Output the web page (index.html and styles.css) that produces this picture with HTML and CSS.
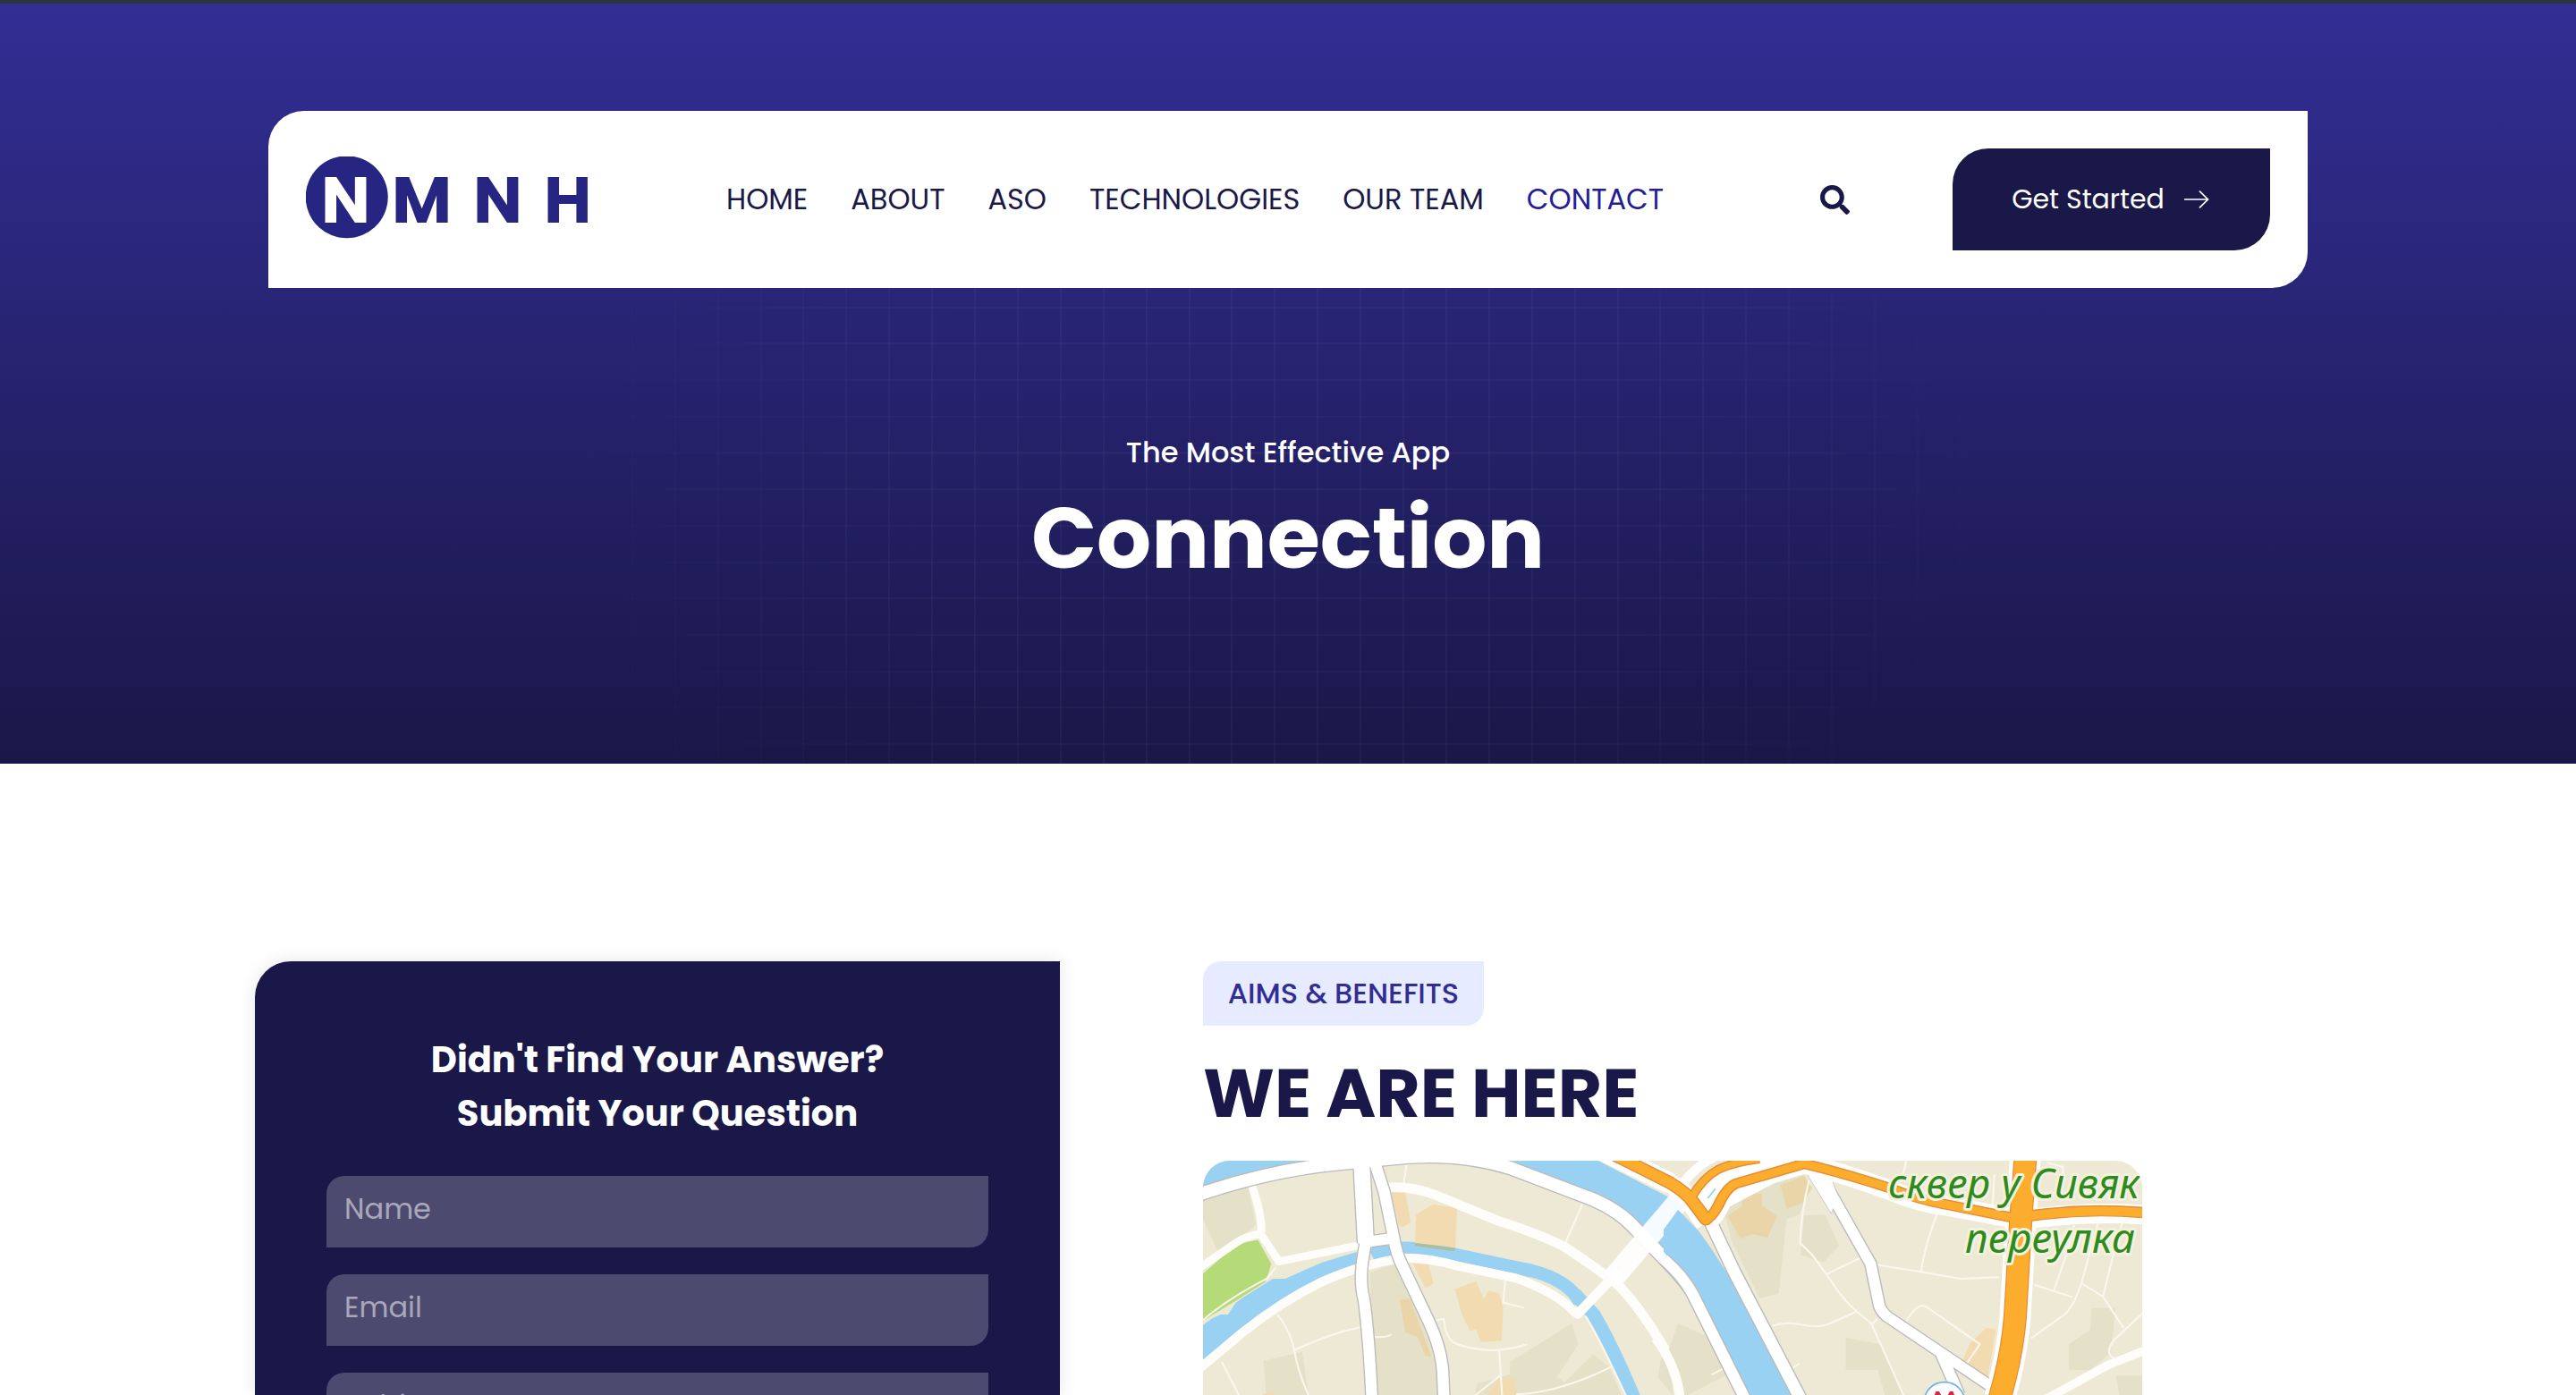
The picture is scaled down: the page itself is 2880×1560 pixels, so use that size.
FILE: index.html
```
<!DOCTYPE html>
<html lang="en">
<head>
<meta charset="utf-8">
<title>Connection</title>
<link rel="stylesheet" href="styles.css">
</head>
<body>
<section class="hero">
  <header class="header">
    <a class="logo">
      <svg width="320" height="96" viewBox="0 0 320 96">
        <circle cx="45.700" cy="45.300" r="46" fill="#262682"/>
        <g class="logo-letters">
          <text x="17" y="74" class="logo-initial">N</text>
          <text x="96" y="74">M</text>
          <text x="187" y="74">N</text>
          <text x="266" y="74">H</text>
        </g>
      </svg>
    </a>
    <nav class="nav">
      <a>HOME</a>
      <a>ABOUT</a>
      <a>ASO</a>
      <a>TECHNOLOGIES</a>
      <a>OUR TEAM</a>
      <a class="current">CONTACT</a>
    </nav>
    <svg class="search" viewBox="0 0 512 512"><path fill="#1a1749" d="M505 442.700L405.300 343c-4.500-4.500-10.600-7-17-7H372c27.600-35.300 44-79.700 44-128C416 93.100 322.900 0 208 0S0 93.100 0 208s93.100 208 208 208c48.300 0 92.700-16.400 128-44v16.300c0 6.400 2.500 12.500 7 17l99.700 99.700c9.400 9.400 24.600 9.400 33.900 0l28.300-28.300c9.400-9.400 9.400-24.600.1-34zM208 336c-70.700 0-128-57.200-128-128 0-70.700 57.200-128 128-128 70.700 0 128 57.200 128 128 0 70.700-57.200 128-128 128z"/></svg>
    <a class="cta">Get Started
      <svg width="28" height="20" viewBox="0 0 28 20" fill="none" stroke="#fff" stroke-width="1.7"><path d="M0 10H27M17 .7L26.500 10L17 19.300"/></svg>
    </a>
  </header>
  <p class="subtitle">The Most Effective App</p>
  <h1 class="title">Connection</h1>
</section>

<main class="content">
  <form class="card">
    <h2 class="card-title">Didn't Find Your Answer?<br>Submit Your Question</h2>
    <input class="field" placeholder="Name">
    <input class="field" placeholder="Email">
    <input class="field" placeholder="Subject">
  </form>
  <section class="place">
    <span class="badge">AIMS &amp; BENEFITS</span>
    <h2 class="place-title">WE ARE HERE</h2>
    <svg class="map" viewBox="0 0 1050 262">
      <rect width="1050" height="400" fill="#eee9d5"/>
      <!-- blocks, buildings, water: west half -->
      <g transform="matrix(.3444 0 0 .3333 -15 -18)">
        <g fill="#e4e1c8">
          <path d="M30 180L190 140L215 270L95 365L30 220Z"/>
          <path d="M585 430L665 400L770 620L805 740V860H605Z"/>
          <path d="M240 725L365 695L390 860H250Z"/>
          <path d="M1040 730L1240 600L1262 670L1192 780L1218 797L1310 703L1362 745L1410 860H920L935 802L1040 770Z"/>
          <path d="M1568 670L1530 720L1520 780L1568 840Z"/>
        </g>
        <g fill="#f2dbb0">
          <path d="M655 160H700L718 260L690 278L678 270Z"/>
          <path d="M725 400L775 402L792 465L765 482Z"/>
          <path d="M682 520L715 515L785 712L765 708L740 645L700 630Z" fill="#e9d5a8"/>
          <path d="M862 485L930 458L955 518L970 490L1005 500L1018 550L1013 658L945 662L930 620L910 625L880 560Z"/>
          <path d="M950 860L1005 785H1058L1062 860Z"/>
          <path d="M210 850L270 825L280 860Z"/><path d="M30 825L60 850H30Z"/>
        </g>
        <path fill="#b4db78" d="M30 445L130 355L170 330L222 320L265 400L255 435L245 462L140 530L30 600Z"/>
        <g fill="#98d1f2">
          <path d="M30 40H470L440 66L30 160Z"/>
          <path d="M30 615L75 582L100 570L125 570L150 530L170 515L270 450L310 450L430 395L560 355V405L400 465L270 548L170 640L30 750Z"/>
          <path d="M1020 40H1300L1600 200V480L1400 250L1280 170Z"/>
        </g>
        <g fill="none" stroke="#98d1f2">
          <path stroke-width="44" d="M590 368Q680 325 870 371Q1000 400 1110 423Q1230 455 1268 530"/>
          <path stroke-width="44" d="M1250 500L1312 570Q1370 670 1445 855"/>
        </g>
        <path fill="#f2dbb0" d="M735 235L790 200L868 212L863 345L732 330Z"/>
        <path fill="#afbd9b" d="M733 330L863 347L860 358L730 340Z"/>
        <g fill="none" stroke="#faf8ee" stroke-width="6">
          <path d="M285 570Q325 620 340 690Q350 760 390 850M340 690Q450 635 555 612M600 645Q640 648 655 637M105 730L165 850M795 590L825 585Q832 660 870 670Q980 710 1095 670M1005 690L1015 850M925 843L1008 775M1025 450L1018 530L1085 548M705 60L695 130M1275 200L1220 330M1060 838Q1200 832 1370 745M40 592Q120 520 250 450L280 412M1285 575Q1330 650 1420 850"/>
        </g>
        <g fill="none" stroke="#fffdf9" stroke-linejoin="round">
          <path stroke-width="32" d="M640 144Q720 138 800 170L1000 255Q1150 305 1220 345Q1330 420 1390 470Q1470 550 1575 745"/>
          <path stroke-width="30" d="M20 762L170 632Q300 525 430 460Q560 400 700 380Q780 380 870 407L1060 448Q1200 500 1255 568"/>
          <path stroke-width="26" d="M30 415L150 330Q180 308 235 298M200 130Q240 250 231 300L290 392L555 337"/>
          <path stroke-width="32" d="M1385 433L1260 568" stroke-linecap="round"/>
        </g>
        <!-- avenues: grey edge under white -->
        <g fill="none" stroke="#bbb">
          <path stroke-width="50" d="M10 174Q250 88 470 65L640 48Q860 20 1040 78L1290 176Q1390 215 1450 285L1568 411Q1640 490 1700 600"/>
          <path stroke-width="60" d="M557 40L572 330"/><path stroke-width="44" d="M572 320L560 400Q553 470 566 520Q582 640 592 860"/>
          <path stroke-width="44" d="M592 30L632 160L662 310Q672 370 690 405L775 590Q820 690 822 770L826 860M590 325L655 315"/>
        </g>
        <g fill="none" stroke="#fff">
          <path stroke-width="42" d="M10 174Q250 88 470 65L640 48Q860 20 1040 78L1290 176Q1390 215 1450 285L1568 411Q1640 490 1700 600"/>
          <path stroke-width="52" d="M557 40L572 330"/><path stroke-width="36" d="M572 320L560 400Q553 470 566 520Q582 640 592 860"/>
          <path stroke-width="36" d="M592 30L632 160L662 310Q672 370 690 405L775 590Q820 690 822 770L826 860M580 326L660 314"/>
          <path stroke-width="72" stroke-opacity=".9" d="M1600 175L1372 452"/>
        </g>
      </g>
      <!-- east half -->
      <g transform="matrix(.35714 0 0 .3333 515 -18)">
        <g fill="#e4e1c8">
          <path d="M230 165L440 100L455 150L425 235L385 250L360 500L300 515L215 330L190 230Z"/>
          <path d="M440 238L505 235L550 340L500 395L428 370Z"/>
          <path d="M45 600L130 640L200 770L60 850L15 690Z"/>
          <path d="M570 648L680 670L760 850H695L670 755H570Z"/>
          <path d="M1340 548H1415L1400 700L1335 757H1268V670L1335 620Z"/>
          <path d="M1415 775H1510V860H1430Z"/>
        </g>
        <g fill="#e9d5a8">
          <path d="M200 240L245 205V160L308 165V205L355 240L325 312L280 300L240 315Z"/>
          <path d="M365 135L440 105L465 145L435 195L385 215Z"/>
          <path fill="#f2dbb0" d="M930 740L960 665L1010 615L1040 620L1015 780Z"/>
        </g>
        <g fill="none" stroke="#faf8ee" stroke-width="6">
          <path d="M455 120Q430 230 427 330L465 370L510 435Q560 520 605 560L650 600L755 850M510 435L615 380M605 560L520 600Q490 618 420 602Q380 595 340 608M665 403L805 427L930 450L1050 445M855 235Q820 330 805 427M650 605L668 585M760 590Q800 520 830 550L990 670L945 740M1160 470L1280 512M1222 488L1260 370L1285 270M1360 260L1308 465Q1280 550 1255 570L1150 650M1308 465L1375 510L1440 615M1435 265L1405 380L1375 510M1505 560L1410 655Q1385 690 1400 710L1420 725M150 772L190 750M380 765L425 735M760 50L750 100M1035 100L1030 200M1200 60L1250 75L1250 110"/>
        </g>
        <path fill="none" stroke="#fffdf9" stroke-width="28" d="M1190 858L1390 740L1520 685"/>
        <path fill="none" stroke="#fffdf9" stroke-width="30" d="M-25 650Q40 740 52 855"/>
        <path fill="#98d1f2" d="M0 285L45 218L110 290L150 350L215 460L410 850H275L100 490L0 360Z"/>
        <g fill="none" stroke="#bbb">
          <path stroke-width="43" d="M0 384Q60 440 90 500L258 860"/>
          <path stroke-width="46" d="M138 240L220 425L432 860"/>
          <path stroke-width="42" d="M500 120L648 400L675 540Q680 560 700 577L1040 822M868 700L925 840"/>
          <path stroke-width="2" fill="#fff" d="M438 80L520 95L545 172L525 232Z"/>
        </g>
        <g fill="none" stroke="#fff">
          <path stroke-width="35" d="M0 384Q60 440 90 500L258 860"/>
          <path stroke-width="38" d="M138 240L220 425L432 860"/>
          <path stroke-width="34" d="M490 100L648 400L675 540Q680 560 700 577L1040 822M868 700L925 840"/>
          <path stroke-width="30" d="M60 130Q110 60 190 25"/>
        </g>
        <!-- highways: white casing, dark edge, orange fill -->
        <path fill="#fff" d="M90 180L200 60L440 40L380 110L150 240Z"/>
        <path stroke="#98d1f2" stroke-width="5" d="M138 180L162 148"/>
        <g fill="none" stroke="#fff">
          <path stroke-width="70" d="M-190 20L20 130"/>
          <path stroke-width="62" d="M20 130Q70 160 90 200L130 265"/>
          <path stroke-width="66" d="M135 255Q150 250 170 210Q195 150 225 135L440 64Q560 95 700 150Q800 195 880 205L1100 248M1140 250Q1330 222 1520 236"/>
          <path stroke-width="98" d="M1134 20L1118 250L1103 530Q1098 680 1052 850"/>
        </g>
        <g fill="none" stroke="#e88d35">
          <path stroke-width="43" d="M-190 15L20 128Q70 160 90 190L132 250" stroke-linejoin="round" stroke-linecap="round"/>
          <path stroke-width="35" d="M135 250Q150 245 170 206Q195 146 225 131L440 64Q560 95 700 143Q800 185 880 200L1100 247" stroke-linecap="round"/>
          <path stroke-width="30" d="M90 172Q125 110 170 84Q220 58 300 48"/>
          <path stroke-width="38" d="M1140 240Q1330 210 1520 230"/>
          <path stroke-width="73" d="M1134 20L1118 250L1103 530Q1098 680 1052 850"/>
        </g>
        <g fill="none" stroke="#fdad2d">
          <path stroke-width="34" d="M-190 15L20 128Q70 160 90 190L132 250" stroke-linejoin="round" stroke-linecap="round"/>
          <path stroke-width="26" d="M135 250Q150 245 170 206Q195 146 225 131L440 64Q560 95 700 143Q800 185 880 200L1100 247" stroke-linecap="round"/>
          <path stroke-width="21" d="M90 172Q125 110 170 84Q220 58 300 48"/>
          <path stroke-width="30" d="M1120 243Q1330 210 1520 230"/>
          <path stroke-width="66" d="M1134 20L1118 250L1103 530Q1098 680 1052 850"/>
        </g>
        <circle cx="879" cy="860" r="63" fill="#fff" stroke="#6fb2e8" stroke-width="5"/>
        <path fill="#e2213c" d="M842 860L852 828H862L879 860L896 828H906L916 860Z"/>
      </g>
      <g class="map-label">
        <text x="766" y="42" textLength="281" lengthAdjust="spacingAndGlyphs">сквер у Сивяк</text>
        <text x="852" y="103" textLength="190" lengthAdjust="spacingAndGlyphs">переулка</text>
      </g>
    </svg>
  </section>
</main>
</body>
</html>
```
FILE: styles.css
```
* { box-sizing: border-box; }

body {
  margin: 0;
  background: #fff;
  font-family: Poppins, Inter, sans-serif;
  color: #1a1749;
}

.hero {
  position: relative;
  height: 854px;
  padding: 120px 300px 0;
  border-top: 4px solid #2d353d;
  background: linear-gradient(#322e94, #1a1748);
  color: #fff;
  text-align: center;
}

/* faint grid that fades towards the edges */
.hero::before {
  content: "";
  position: absolute;
  left: 658px;
  top: 298px;
  width: 1544px;
  height: 552px;
  background:
    repeating-linear-gradient(90deg, rgba(255,255,255,.036) 0 2px, transparent 2px 47.900px),
    repeating-linear-gradient(rgba(255,255,255,.028) 0 2px, transparent 2px 40.700px);
  -webkit-mask-image: radial-gradient(ellipse 840px 680px at 50% 253px, #000 50%, transparent 100%);
  mask-image: radial-gradient(ellipse 840px 680px at 50% 253px, #000 50%, transparent 100%);
}

.header {
  position: relative;
  display: flex;
  align-items: center;
  height: 198px;
  padding: 0 42px;
  background: #fff;
  border-radius: 40px 0;
}

.logo { width: 470px; height: 96px; text-align: left; }
.logo-letters {
  font: 700 73px Poppins, "Open Sans", sans-serif;
  fill: #262682;
}
.logo-initial { fill: #fff; }

.nav {
  display: flex;
  gap: 48px;
  width: 1223px;
  font-size: 32px;
  line-height: 48px;
  color: #1a1749;
  white-space: nowrap;
}
.current { color: #231d97; }

.search { width: 33px; height: 33px; }

.cta {
  display: flex;
  align-items: center;
  justify-content: center;
  gap: 22px;
  width: 355px;
  height: 114px;
  margin-left: auto;
  padding-right: 2px;
  border-radius: 40px 0;
  background: #1a1749;
  color: #fff;
  font-size: 30px;
}

.subtitle {
  position: relative;
  margin: 160px 0 0;
  font-size: 32px;
  line-height: 48px;
  font-weight: 500;
}

.title {
  position: relative;
  margin: 0;
  font-size: 96px;
  line-height: 144px;
  font-weight: 700;
}

.content {
  display: grid;
  grid-template-columns: 900px 1050px;
  column-gap: 160px;
  height: 706px;
  padding: 221px 0 0 285px;
  overflow: hidden;
}

.card {
  display: flex;
  flex-direction: column;
  gap: 30px;
  height: 485px;
  padding: 80px 80px 0;
  border-radius: 40px 0 0 0;
  background: #1a1749;
  box-shadow: 0 0 20px rgba(0, 0, 0, .1);
  overflow: hidden;
}

.card-title {
  margin: 0 0 10px;
  color: #fff;
  font-size: 40px;
  line-height: 60px;
  font-weight: 700;
  text-align: center;
}

.field {
  flex: none;
  width: 740px;
  height: 80px;
  padding: 0 20px 6px;
  border: 0;
  border-radius: 20px 0;
  background: #4d4a70;
  font: 400 32px Poppins, Inter, sans-serif;
}
.field::placeholder { color: #a9a7ba; opacity: 1; }

.badge {
  display: flex;
  align-items: center;
  justify-content: center;
  width: 314px;
  height: 72px;
  border-radius: 20px 0;
  background: #e6ebff;
  color: #322d92;
  font-size: 32px;
  font-weight: 500;
}

.place-title {
  margin: 30px 0;
  font-size: 76px;
  line-height: 91px;
  font-weight: 700;
}

.map {
  display: block;
  width: 1050px;
  height: 262px;
  border-radius: 30px 30px 0 0;
}

.map-label text {
  font: italic 400 45px "Noto Sans", "Open Sans", sans-serif;
  fill: #2f8a1e;
  stroke: #f4f1df;
  stroke-width: 6px;
  stroke-linejoin: round;
  paint-order: stroke;
}
```
